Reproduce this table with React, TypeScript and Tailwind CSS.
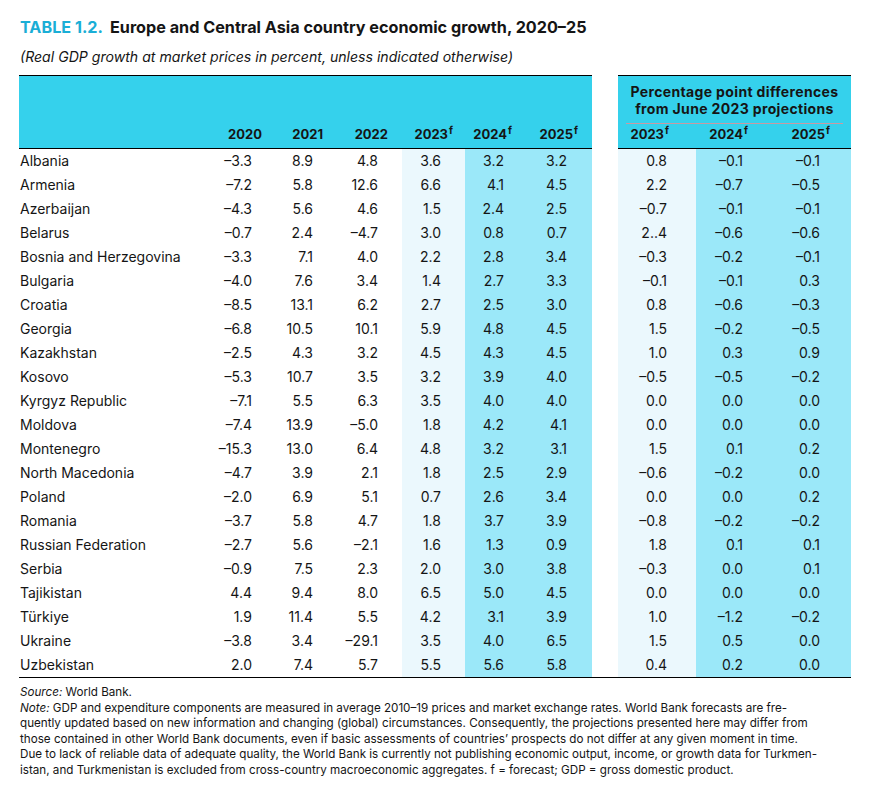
import React from "react";

type Row = [string, string, string, string, string, string, string, string, string, string];

const rows: Row[] = [
  ["Albania", "–3.3", "8.9", "4.8", "3.6", "3.2", "3.2", "0.8", "–0.1", "–0.1"],
  ["Armenia", "–7.2", "5.8", "12.6", "6.6", "4.1", "4.5", "2.2", "–0.7", "–0.5"],
  ["Azerbaijan", "–4.3", "5.6", "4.6", "1.5", "2.4", "2.5", "–0.7", "–0.1", "–0.1"],
  ["Belarus", "–0.7", "2.4", "–4.7", "3.0", "0.8", "0.7", "2..4", "–0.6", "–0.6"],
  ["Bosnia and Herzegovina", "–3.3", "7.1", "4.0", "2.2", "2.8", "3.4", "–0.3", "–0.2", "–0.1"],
  ["Bulgaria", "–4.0", "7.6", "3.4", "1.4", "2.7", "3.3", "–0.1", "–0.1", "0.3"],
  ["Croatia", "–8.5", "13.1", "6.2", "2.7", "2.5", "3.0", "0.8", "–0.6", "–0.3"],
  ["Georgia", "–6.8", "10.5", "10.1", "5.9", "4.8", "4.5", "1.5", "–0.2", "–0.5"],
  ["Kazakhstan", "–2.5", "4.3", "3.2", "4.5", "4.3", "4.5", "1.0", "0.3", "0.9"],
  ["Kosovo", "–5.3", "10.7", "3.5", "3.2", "3.9", "4.0", "–0.5", "–0.5", "–0.2"],
  ["Kyrgyz Republic", "–7.1", "5.5", "6.3", "3.5", "4.0", "4.0", "0.0", "0.0", "0.0"],
  ["Moldova", "–7.4", "13.9", "–5.0", "1.8", "4.2", "4.1", "0.0", "0.0", "0.0"],
  ["Montenegro", "–15.3", "13.0", "6.4", "4.8", "3.2", "3.1", "1.5", "0.1", "0.2"],
  ["North Macedonia", "–4.7", "3.9", "2.1", "1.8", "2.5", "2.9", "–0.6", "–0.2", "0.0"],
  ["Poland", "–2.0", "6.9", "5.1", "0.7", "2.6", "3.4", "0.0", "0.0", "0.2"],
  ["Romania", "–3.7", "5.8", "4.7", "1.8", "3.7", "3.9", "–0.8", "–0.2", "–0.2"],
  ["Russian Federation", "–2.7", "5.6", "–2.1", "1.6", "1.3", "0.9", "1.8", "0.1", "0.1"],
  ["Serbia", "–0.9", "7.5", "2.3", "2.0", "3.0", "3.8", "–0.3", "0.0", "0.1"],
  ["Tajikistan", "4.4", "9.4", "8.0", "6.5", "5.0", "4.5", "0.0", "0.0", "0.0"],
  ["Türkiye", "1.9", "11.4", "5.5", "4.2", "3.1", "3.9", "1.0", "–1.2", "–0.2"],
  ["Ukraine", "–3.8", "3.4", "–29.1", "3.5", "4.0", "6.5", "1.5", "0.5", "0.0"],
  ["Uzbekistan", "2.0", "7.4", "5.7", "5.5", "5.6", "5.8", "0.4", "0.2", "0.0"],
];

const F = () => <span className="text-[10px] font-bold relative -top-[5px] ml-[1px]">f</span>;

export default function App() {
  return (
    <div
      className="bg-white min-h-[797px] w-[869px] text-[#151515]"
      style={{ fontFamily: "Inter, Lato, sans-serif" }}
    >
      <div className="pl-[19px] pt-[17px] w-[851px]">
        {/* Title */}
        <div className="h-[20px] leading-[20px] text-[16.2px] font-bold whitespace-nowrap pl-[1px]">
          <span className="text-[#1aaed6]">TABLE 1.2.</span>
          <span className="ml-[7px]">Europe and Central Asia country economic growth, 2020–25</span>
        </div>
        <div className="mt-[11px] h-[18px] leading-[18px] text-[14.1px] italic whitespace-nowrap pl-[1px]">
          (Real GDP growth at market prices in percent, unless indicated otherwise)
        </div>

        {/* Header */}
        <div className="mt-[9px] flex">
          <div className="w-[573px] h-[74px] bg-[#35d1ec] border-t border-b border-black flex items-end pb-[4px] text-[13px] font-bold">
            <div className="w-[181px]" />
            <div className="w-[64px] text-right pr-[2px]">2020</div>
            <div className="w-[61px] text-right pr-[2px]">2021</div>
            <div className="w-[77px] text-right pr-[14px]">2022</div>
            <div className="w-[63px] text-right pr-[12px]">2023<F /></div>
            <div className="w-[63px] text-right pr-[16px]">2024<F /></div>
            <div className="w-[64px] text-right pr-[14px]">2025<F /></div>
          </div>
          <div className="w-[26px]" />
          <div className="w-[233px] h-[74px] bg-[#35d1ec] border-t border-b border-black flex flex-col font-bold">
            <div className="pt-[7px] text-center leading-[17px] text-[14px] tracking-[0.35px] whitespace-nowrap">
              <div>Percentage point differences</div>
              <div>from June 2023 projections</div>
            </div>
            <div className="mx-[8px] mt-[6px] border-t border-[#c99aa3]" />
            <div className="flex flex-1 items-end pb-[4px] text-[13px]">
              <div className="w-[78px] text-right pr-[27px]">2023<F /></div>
              <div className="w-[77px] text-right pr-[25px]">2024<F /></div>
              <div className="w-[78px] text-right pr-[21px]">2025<F /></div>
            </div>
          </div>
        </div>

        {/* Body */}
        <div className="border-b border-black text-[14px]">
          {rows.map((r) => (
            <div key={r[0]} className="flex h-[24px] leading-[24px]">
              <div className="w-[181px] pl-[1px] whitespace-nowrap">{r[0]}</div>
              <div className="w-[64px] text-right pr-[12px]">{r[1]}</div>
              <div className="w-[61px] text-right pr-[12px]">{r[2]}</div>
              <div className="w-[77px] text-right pr-[24px]">{r[3]}</div>
              <div className="w-[63px] text-right pr-[24px] bg-[#ebf8fd]">{r[4]}</div>
              <div className="w-[63px] text-right pr-[24px] bg-[#9be8f9]">{r[5]}</div>
              <div className="w-[64px] text-right pr-[25px] bg-[#9be8f9]">{r[6]}</div>
              <div className="w-[26px]" />
              <div className="w-[78px] text-right pr-[29px] bg-[#ebf8fd]">{r[7]}</div>
              <div className="w-[77px] text-right pr-[30px] bg-[#9be8f9]">{r[8]}</div>
              <div className="w-[78px] text-right pr-[31px] bg-[#9be8f9]">{r[9]}</div>
            </div>
          ))}
        </div>

        {/* Notes */}
        <div className="mt-[7px] text-[11.65px] leading-[15.5px] whitespace-nowrap pl-[1px]">
          <div><i>Source:</i> World Bank.</div>
          <div>
            <i>Note:</i> GDP and expenditure components are measured in average 2010–19 prices and market exchange rates. World Bank forecasts are fre-
          </div>
          <div>
            quently updated based on new information and changing (global) circumstances. Consequently, the projections presented here may differ from
          </div>
          <div>
            those contained in other World Bank documents, even if basic assessments of countries’ prospects do not differ at any given moment in time.
          </div>
          <div>
            Due to lack of reliable data of adequate quality, the World Bank is currently not publishing economic output, income, or growth data for Turkmen-
          </div>
          <div>
            istan, and Turkmenistan is excluded from cross-country macroeconomic aggregates. f = forecast; GDP = gross domestic product.
          </div>
        </div>
      </div>
    </div>
  );
}
